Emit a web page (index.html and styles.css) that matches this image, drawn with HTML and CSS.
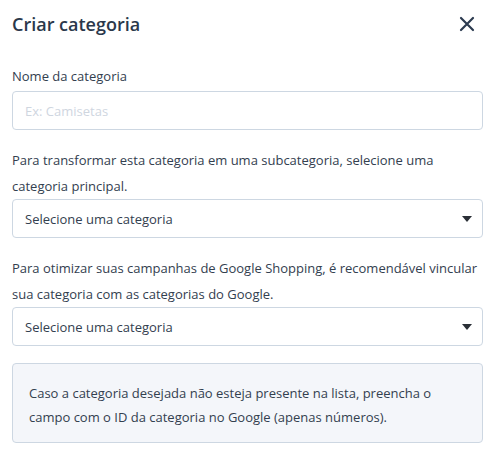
FILE: index.html
```html
<!DOCTYPE html>
<html lang="pt">
<head>
<meta charset="utf-8">
<link rel="stylesheet" href="styles.css">
</head>
<body>
<div class="modal">
  <div class="header">
    <h1 class="title">Criar categoria</h1>
    <button class="close" aria-label="Fechar">
      <svg width="16" height="16" viewBox="0 0 16 16"><path d="M2 2 L14 14 M14 2 L2 14" stroke="#2c3b50" stroke-width="2.2" stroke-linecap="round"/></svg>
    </button>
  </div>
  <label class="label">Nome da categoria</label>
  <input class="input" type="text" placeholder="Ex: Camisetas">
  <p class="help">Para transformar esta categoria em uma subcategoria, selecione uma categoria principal.</p>
  <div class="select"><span>Selecione uma categoria</span><span class="caret"></span></div>
  <p class="help">Para otimizar suas campanhas de Google Shopping, é recomendável vincular sua categoria com as categorias do Google.</p>
  <div class="select"><span>Selecione uma categoria</span><span class="caret"></span></div>
  <div class="info">Caso a categoria desejada não esteja presente na lista, preencha o campo com o ID da categoria no Google (apenas números).</div>
</div>
</body>
</html>
```
FILE: styles.css
```css
html, body { margin: 0; padding: 0; background: #fff; }
body { font-family: "Open Sans", "Noto Sans", sans-serif; color: #33404f; font-size: 13px; }
.modal { padding: 0 11px 0 12px; display: flex; flex-direction: column; }
.header { display: flex; align-items: center; justify-content: space-between; height: 48px; }
.title { margin: 0; font-size: 18px; font-weight: 600; color: #2a384b; }
.close { border: 0; background: none; padding: 0; margin-right: 8px; display: flex; }
.label { margin-top: 17px; line-height: 22px; }
.input { margin-top: 4px; height: 39px; box-sizing: border-box; border: 1px solid #cdd7e2; border-radius: 4px; padding: 0 12px; font: inherit; font-size: 13px; outline: none; }
.input::placeholder { color: #cfd6df; }
.help { margin: 17px 0 0; line-height: 26px; }
.select { margin-top: 0; height: 39px; box-sizing: border-box; border: 1px solid #cdd7e2; border-radius: 4px; padding: 0 10px 0 12px; display: flex; align-items: center; justify-content: space-between; }
.caret { width: 0; height: 0; border-left: 5px solid transparent; border-right: 5px solid transparent; border-top: 6px solid #2a2f36; }
.info { margin-top: 17px; background: #f4f6fa; border: 1px solid #cdd7e2; border-radius: 4px; padding: 17px 16px 13px 16px; line-height: 24px; }
```
